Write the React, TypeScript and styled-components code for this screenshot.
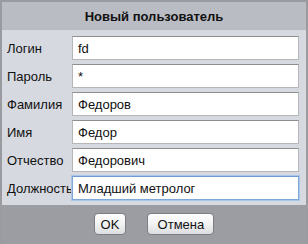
import styled, { createGlobalStyle } from 'styled-components';

const GlobalStyle = createGlobalStyle`
  html, body {
    margin: 0;
    padding: 0;
    background: #9c9da2;
  }
  body {
    font-family: "Liberation Sans", Arial, sans-serif;
  }
`;

const Dialog = styled.div`
  width: 308px;
  height: 244px;
  box-sizing: border-box;
  border: 2px solid #9a9ba0;
  border-bottom: none;
  background: #9c9da2;
  display: flex;
  flex-direction: column;
`;

const TitleBar = styled.div`
  height: 28px;
  background: #b9bcc3;
  display: flex;
  align-items: center;
  justify-content: center;
  font-size: 13px;
  font-weight: bold;
  color: #111;
`;

const Body = styled.div`
  background: #d6d9e0;
  padding: 6px 7px 5px 5px;
  display: flex;
  flex-direction: column;
  gap: 4px;
`;

const Row = styled.div`
  display: flex;
  align-items: center;
  height: 24px;
`;

const Label = styled.label`
  width: 65px;
  flex: none;
  font-size: 13px;
  color: #111;
`;

const Input = styled.input<{ $focused?: boolean }>`
  flex: 1;
  height: 24px;
  box-sizing: border-box;
  padding: 0 5px;
  font-family: "Liberation Sans", Arial, sans-serif;
  font-size: 13px;
  color: #111;
  background: #fff;
  outline: none;
  caret-color: #000;
  border: 1px solid ${(p) => (p.$focused ? '#7ea8d8' : '#b4b6ba')};
  border-top-color: ${(p) => (p.$focused ? '#6f9bd0' : '#8c8e92')};
  box-shadow: ${(p) => (p.$focused ? '0 0 0 1px #a9c6e8' : 'none')};
`;

const Footer = styled.div`
  flex: 1;
  display: flex;
  justify-content: center;
  align-items: flex-start;
  gap: 21px;
  padding-top: 8px;
`;

const Button = styled.button<{ $wide?: boolean }>`
  height: 22px;
  min-width: ${(p) => (p.$wide ? '67px' : '30px')};
  padding: 0 6px;
  font-family: "Liberation Sans", Arial, sans-serif;
  font-size: 13px;
  color: #111;
  border: 1px solid #7d7f84;
  border-radius: 4px;
  background: linear-gradient(#ffffff, #f2f2f2 50%, #dcdde0);
`;

const fields = [
  { label: 'Логин', value: 'fd' },
  { label: 'Пароль', value: '*' },
  { label: 'Фамилия', value: 'Федоров' },
  { label: 'Имя', value: 'Федор' },
  { label: 'Отчество', value: 'Федорович' },
  { label: 'Должность', value: 'Младший метролог', focused: true },
];

const App: React.FC = () => {
  return (
    <>
      <GlobalStyle />
      <Dialog>
        <TitleBar>Новый пользователь</TitleBar>
        <Body>
          {fields.map((f) => (
            <Row key={f.label}>
              <Label>{f.label}</Label>
              <Input defaultValue={f.value} $focused={f.focused} />
            </Row>
          ))}
        </Body>
        <Footer>
          <Button>OK</Button>
          <Button $wide>Отмена</Button>
        </Footer>
      </Dialog>
    </>
  );
};

export default App;
